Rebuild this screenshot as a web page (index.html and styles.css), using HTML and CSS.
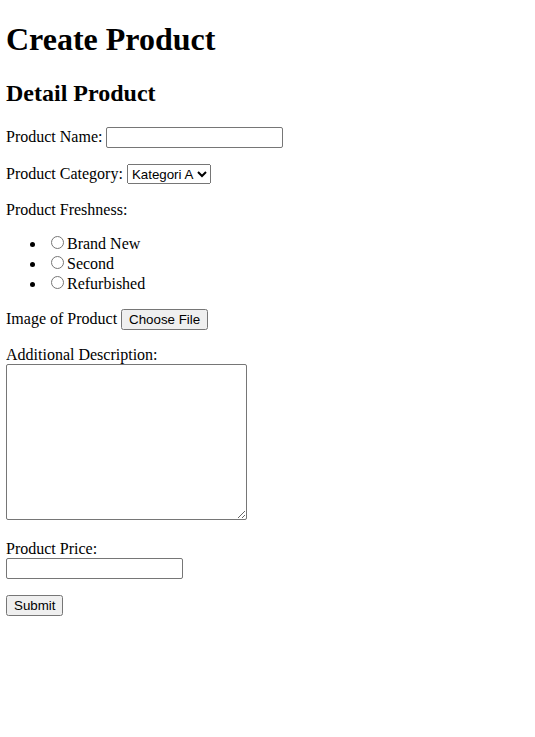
FILE: index.html
```html
<!DOCTYPE html>
<html>
<head>
<meta charset="utf-8">
<title>Create Product</title>
<link rel="stylesheet" href="styles.css">
</head>
<body class="page">
<h1 class="title">Create Product</h1>
<form class="form">
  <h2 class="subtitle">Detail Product</h2>
  <p class="row"><label for="name">Product Name:</label> <input class="text" id="name" type="text"></p>
  <p class="row"><label for="cat">Product Category:</label> <select class="select" id="cat"><option>Kategori A</option><option>Kategori B</option></select></p>
  <p class="row row-tight">Product Freshness:</p>
  <ul class="list">
    <li><input class="radio" type="radio" name="fresh" id="f1"><label for="f1">Brand New</label></li>
    <li><input class="radio" type="radio" name="fresh" id="f2"><label for="f2">Second</label></li>
    <li><input class="radio" type="radio" name="fresh" id="f3"><label for="f3">Refurbished</label></li>
  </ul>
  <p class="row"><label for="img">Image of Product</label> <input class="file" id="img" type="file"></p>
  <p class="row"><label for="desc">Additional Description:</label><br><textarea class="area" id="desc" cols="30" rows="10"></textarea></p>
  <p class="row"><label for="price">Product Price:</label><br><input class="text" id="price" type="number"></p>
  <p class="row"><button class="btn" type="submit">Submit</button></p>
</form>
</body>
</html>
```
FILE: styles.css
```css
.page {
  margin: 0 6px;
  font-family: "Liberation Serif", "Times New Roman", serif;
  font-size: 16px;
  color: #000;
  background: #fff;
}
.title {
  font-size: 32px;
  margin: 21px 0 22px;
}
.subtitle {
  font-size: 24px;
  margin: 22px 0 20px;
}
.row {
  margin: 16px 0;
}
.row-tight {
  margin-bottom: 14px;
}
.list {
  margin: 14px 0 16px;
  padding-left: 40px;
}
.text, .select, .file, .btn, .area {
  font-family: "Liberation Sans", Arial, sans-serif;
  font-size: 13.333px;
}
.text {
  width: 171px;
  height: 17px;
  border: 1px solid #767676;
  border-radius: 2px;
  padding: 1px 2px;
  box-sizing: content-box;
}
.select {
  width: 84px;
  height: 20px;
  margin-bottom: 1px;
}
.file {
  width: 88px;
  overflow: hidden;
}
.area {
  width: 235px;
  height: 150px;
  border: 1px solid #767676;
  border-radius: 2px;
  padding: 2px;
  resize: both;
}
.radio {
  margin: 3px 3px 0 5px;
}
.btn {
  margin-top: 0;
}
```
